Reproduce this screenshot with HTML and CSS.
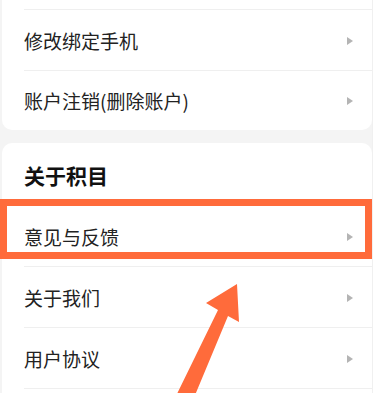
FILE: index.html
```html
<!DOCTYPE html>
<html lang="zh-CN">
<head>
<meta charset="utf-8">
<link rel="stylesheet" href="styles.css">
</head>
<body>
<div class="screen">
  <div class="card card-top">
    <div class="stub"></div>
    <div class="row"><span class="label">修改绑定手机</span><span class="tri"></span></div>
    <div class="row row-last"><span class="label">账户注销(删除账户)</span><span class="tri"></span></div>
  </div>
  <div class="card card-bottom">
    <div class="title">关于积目</div>
    <div class="row"><span class="label">意见与反馈</span><span class="tri"></span></div>
    <div class="row"><span class="label">关于我们</span><span class="tri"></span></div>
    <div class="row"><span class="label">用户协议</span><span class="tri"></span></div>
    <div class="row"><span class="label"></span></div>
  </div>
  <div class="highlight"></div>
  <svg class="arrow" width="373" height="393" viewBox="0 0 373 393">
    <polygon points="174,400 218,310 206,303 237,284 239,322 228,316 193,400" fill="#ff6b3b"/>
  </svg>
</div>
</body>
</html>
```
FILE: styles.css
```css
html, body {
  margin: 0;
  padding: 0;
  background: #ffffff;
}
.screen {
  position: relative;
  width: 373px;
  height: 393px;
  overflow: hidden;
  background: #f4f4f4;
  font-family: "Noto Sans CJK SC", "Noto Sans", sans-serif;
  color: #222222;
  border-right: 1px solid #f0f0f0;
  box-sizing: border-box;
}
.card {
  margin-left: 2px;
  width: 370px;
  background: #ffffff;
}
.card-top {
  border-radius: 0 0 10px 10px;
  margin-bottom: 13px;
}
.card-bottom {
  border-radius: 10px 10px 0 0;
}
.stub {
  height: 9px;
}
.row {
  margin-left: 22px;
  height: 61px;
  border-top: 1px solid #efefef;
  display: flex;
  align-items: center;
  justify-content: space-between;
  padding: 1px 19px 0 0;
  box-sizing: border-box;
}
.row-last {
  height: 60px;
}
.row .label {
  font-size: 19px;
  line-height: 24px;
}
.tri {
  width: 0;
  height: 0;
  border-left: 6px solid #b4b4b4;
  border-top: 4px solid transparent;
  border-bottom: 4px solid transparent;
}
.title {
  height: 62px;
  padding-left: 22px;
  display: flex;
  align-items: center;
  font-size: 21px;
  font-weight: 700;
  color: #111111;
  padding-top: 1px;
  box-sizing: border-box;
}
.highlight {
  position: absolute;
  left: 0;
  top: 199px;
  width: 372px;
  height: 60px;
  border: 7px solid #ff6b3b;
  box-sizing: border-box;
}
.arrow {
  position: absolute;
  left: 0;
  top: 0;
}
```
